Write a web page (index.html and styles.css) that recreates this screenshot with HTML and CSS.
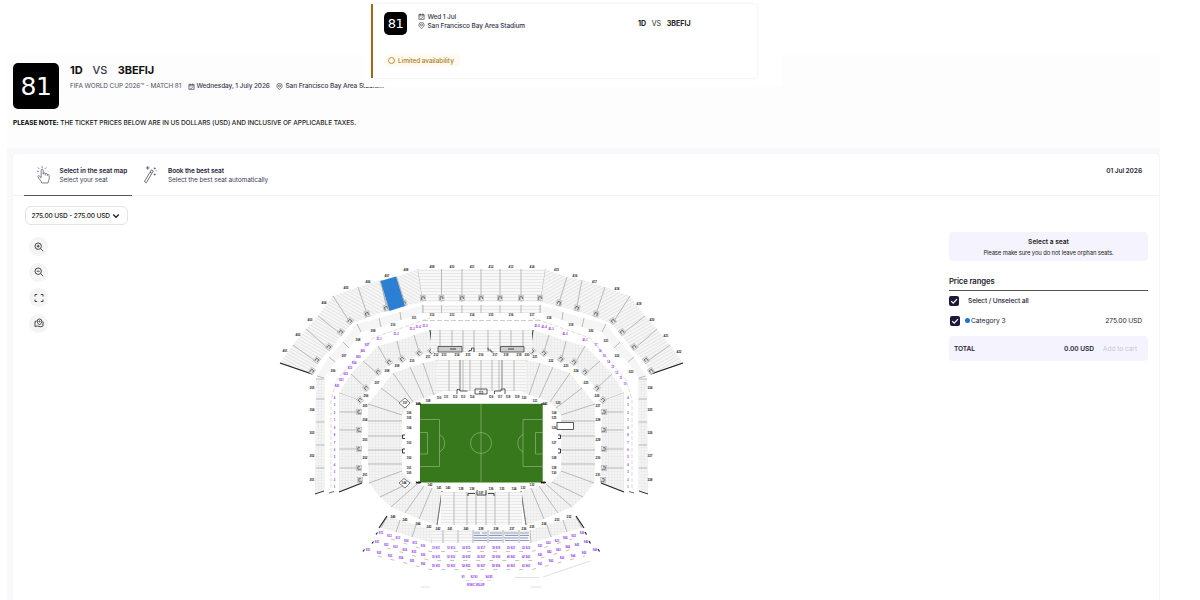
FILE: index.html
```html
<!DOCTYPE html>
<html lang="en">
<head>
<meta charset="utf-8">
<title>Match 81 tickets</title>
<link rel="stylesheet" href="styles.css">
</head>
<body>
<svg class="defs" width="0" height="0">
  <symbol id="cal" viewBox="0 0 16 16"><path d="M2 3.500h12v11H2zM2 6.500h12M5 1v4M11 1v4M5 11l2 2 4-4" fill="none" stroke="currentColor" stroke-width="1.500"/></symbol>
  <symbol id="pin" viewBox="0 0 16 16"><path d="M8 15C4.500 12 2 10 2 6.800a6 6 0 0 1 12 0C14 10 11.500 12 8 15z" fill="none" stroke="currentColor" stroke-width="1.500"/><circle cx="8" cy="6.800" r="2.400" fill="none" stroke="currentColor" stroke-width="1.500"/></symbol>
  <symbol id="check" viewBox="0 0 10 10"><path d="M2.200 5.200l2 2 3.800-4" fill="none" stroke="#fff" stroke-width="1.200"/></symbol>
</svg>
<div class="page">
  <header class="hero">
    <div class="event">
      <div class="badge">81</div>
      <div class="info">
        <h1 class="teams"><span>1D</span><span class="vs">VS</span><span>3BEFIJ</span></h1>
        <div class="meta">
          <span class="comp">FIFA WORLD CUP 2026™ - MATCH 81</span>
          <svg class="mi"><use href="#cal"/></svg><span class="date">Wednesday, 1 July 2026</span>
          <svg class="mi"><use href="#pin"/></svg><span class="place">San Francisco Bay Area Stadium</span>
        </div>
      </div>
    </div>
    <p class="note"><b>PLEASE NOTE:</b> THE TICKET PRICES BELOW ARE IN US DOLLARS (USD) AND INCLUSIVE OF APPLICABLE TAXES.</p>
  </header>

  <div class="backdrop">
  <main class="panel">
    <nav class="tabs">
      <div class="tab active">
        <svg class="ti" viewBox="0 0 16 20"><path d="M5.500 13V5.500c0-1.600 2.200-1.600 2.200 0V10M7.700 9c.3-1.200 2.200-1 2.200.3V11M9.900 9.500c.4-1 2.200-.8 2.200.5v1.500M12.100 10.500c.5-.8 2-.5 2 .8V14c0 2-1 3-1.300 5H6.200C6 17 3 15 2.200 12.500c-.4-1.500 1.200-1.800 2-.5l1.300 2M6.500 3V1M3.500 4L2 2.500M9.500 4L11 2.500M3 6.500H1" fill="none" stroke="currentColor" stroke-width=".8"/></svg>
        <div><strong>Select in the seat map</strong><span>Select your seat</span></div>
      </div>
      <div class="tab second">
        <svg class="ti" viewBox="0 0 16 20"><path d="M1.500 17.500L9 5l2 1.200L3.500 18.800zM7.500 7.500l2 1.200M5 1v4M3 3h4M12.500 2.500v2M11.500 3.500h2M12.500 9v2M11.500 10h2M14 5.500v1" fill="none" stroke="currentColor" stroke-width=".9"/></svg>
        <div><strong>Book the best seat</strong><span>Select the best seat automatically</span></div>
      </div>
      <time class="day">01 Jul 2026</time>
    </nav>
    <div class="content">
      <aside class="tools">
        <button class="filter"><span>275.00 USD - 275.00 USD</span><svg viewBox="0 0 8 6"><path d="M1.200 1.500L4 4.300l2.800-2.800" fill="none" stroke="#222" stroke-width="1.300"/></svg></button>
        <button class="tool"><svg viewBox="0 0 10 10"><path d="M6.500 6.500L9.200 9.200M4.200 2.700v3M2.700 4.200h3"/><circle cx="4.200" cy="4.200" r="3.200"/></svg></button>
        <button class="tool"><svg viewBox="0 0 10 10"><path d="M6.500 6.500L9.200 9.200M2.700 4.200h3"/><circle cx="4.200" cy="4.200" r="3.200"/></svg></button>
        <button class="tool"><svg viewBox="0 0 10 10"><path d="M1 3.500V1.500h2.200M6.800 1.500H9v2M9 6.500v2H6.800M3.200 8.500H1v-2"/></svg></button>
        <button class="tool"><svg viewBox="0 0 10 10"><path d="M2.600 3L1 3.500v5L3.500 8l3 .8L9 8V3.500M5.500 7C4 5.500 3.200 4.600 3.200 3.300a2.300 2.300 0 0 1 4.600 0C7.800 4.600 7 5.500 5.500 7z"/><circle cx="5.500" cy="3.400" r=".6"/></svg></button>
      </aside>
      <svg id="map" class="map" viewBox="270 255 430 345"></svg>
      <aside class="cart">
        <div class="hint"><strong>Select a seat</strong><span>Please make sure you do not leave orphan seats.</span></div>
        <h2>Price ranges</h2>
        <div class="row all"><svg class="box"><use href="#check"/></svg><span>Select / Unselect all</span></div>
        <div class="row cat"><svg class="box"><use href="#check"/></svg><i class="dot"></i><span>Category 3</span><span class="price">275.00 USD</span></div>
        <div class="total"><b>TOTAL</b><b class="sum">0.00 USD</b><span class="add">Add to cart</span></div>
      </aside>
    </div>
  </main>
  </div>
</div>

<div class="overlay">
  <article class="ticket">
    <div class="badge small">81</div>
    <div class="when">
      <div><svg class="mi"><use href="#cal"/></svg><span>Wed 1 Jul</span></div>
      <div><svg class="mi"><use href="#pin"/></svg><span>San Francisco Bay Area Stadium</span></div>
    </div>
    <div class="pair"><b>1D</b><span>VS</span><b>3BEFIJ</b></div>
    <div class="avail"><i></i><span>Limited availability</span></div>
  </article>
</div>
<script src="map.js"></script>
</body>
</html>
```
FILE: styles.css
```css
* { box-sizing: border-box; }
body { margin: 0; width: 1200px; height: 600px; overflow: hidden; background: #fff; font-family: Inter, "Liberation Sans", sans-serif; color: #25253a; position: relative; }
.defs { position: absolute; }
.page { margin: 55px 40px 0 7px; height: 545px; background: #fdfdfe; overflow: hidden; }
.hero { height: 93px; padding: 8px 0 0 6px; }
.event { display: flex; height: 46px; }
.badge { width: 46px; height: 46px; border-radius: 5px; background: #000; color: #fff; font: 25px/47px "DejaVu Sans", sans-serif; text-align: center; letter-spacing: -.5px; }
.info { margin-left: 11px; white-space: nowrap; }
.teams { margin: 1px 0 0; font-size: 11px; line-height: 13px; font-weight: 700; display: flex; letter-spacing: -.1px; color: #111; }
.teams span { margin-right: 11px; }
.teams .vs { font-weight: 500; color: #35354a; margin: 0 10.500px 0 -1px; }
.meta { display: flex; align-items: center; height: 10px; margin-top: 4px; font-size: 6.500px; color: #38384c; }
.mi { width: 7px; height: 7px; color: #38384c; flex: none; }
.comp { width: 117.500px; color: #505062; letter-spacing: -.12px; }
.date { width: 79px; margin-left: 2px; font-weight: 500; letter-spacing: -.1px; }
.place { margin-left: 3px; font-weight: 500; letter-spacing: -.08px; }
.note { margin: 10px 0 0; font-size: 6.500px; line-height: 8px; color: #222; letter-spacing: -.075px; font-weight: 500; }
.note b { color: #000; }

.backdrop { background: #f9f9fc; padding: 6px 1px 0 6px; height: 452px; }
.panel { background: #fff; height: 446px; box-shadow: 0 0 2px #ececf2; border-radius: 4px 4px 0 0; }
.tabs { display: flex; height: 42px; border-bottom: 1px solid #f1f1f4; padding-left: 11px; font-size: 6.500px; line-height: 9px; }
.tab { display: flex; padding-top: 12px; height: 42px; }
.tab.active { width: 108px; border-bottom: 1.500px solid #55556a; }
.tab div { display: flex; flex-direction: column; white-space: nowrap; padding-top: 1px; }
.tab strong { font-weight: 600; letter-spacing: -.07px; }
.second strong { letter-spacing: -.13px; }
.tab span { letter-spacing: -.1px; color: #40405a; }
.ti { width: 15px; height: 19px; margin: -1px 8.500px 0 12px; color: #55556a; flex: none; }
.second .ti { margin-left: 11px; margin-right: 10px; }
.day { margin: 13px 17px 0 auto; font-size: 6.600px; font-weight: 600; letter-spacing: -.1px; }
.content { display: flex; height: 404px; }
.tools { width: 115px; padding: 10px 0 0 12px; display: flex; flex-direction: column; }
button { font-family: inherit; border: 0; padding: 0; }
.filter { width: 103px; height: 19px; border: 1px solid #e3e3e8; border-radius: 6px; background: #fff; font-size: 6.600px; color: #222; display: flex; align-items: center; padding-left: 5.500px; margin-bottom: 12px; white-space: nowrap; font-weight: 500; letter-spacing: -.15px; }
.filter span { width: 80.500px; text-align: left; }
.filter svg { width: 8px; height: 6px; }
.tool { width: 19px; height: 19px; border-radius: 50%; background: #f4f4f5; margin: 0 0 6.500px 4px; display: flex; align-items: center; justify-content: center; }
.tool svg { width: 10px; height: 10px; fill: none; stroke: #333; stroke-width: .9; }
.map { width: 430px; height: 345px; margin: 59px 0 0 142px; flex: none; }
.map text { font: bold 2.900px "Liberation Sans", sans-serif; text-anchor: middle; fill: #111; }
.map .p text { fill: #8a1ff0; font-size: 2.600px; }
.cart { width: 199px; margin: 36px 11px 0 auto; }
.hint { height: 29px; border-radius: 4px; background: #f4f3fe; text-align: center; display: flex; flex-direction: column; padding-top: 6px; line-height: 9.500px; font-size: 6.600px; color: #222; }
.hint strong { font-weight: 600; }
.hint span { font-size: 5.900px; letter-spacing: -.13px; }
.cart h2 { margin: 15px 0 0; height: 15px; font-size: 7.700px; line-height: 11px; font-weight: 600; color: #1b1b28; border-bottom: 1px solid #555562; letter-spacing: -.1px; }
.row { display: flex; align-items: center; height: 20px; font-size: 6.700px; font-weight: 500; }
.box { width: 10px; height: 10px; border-radius: 2px; background: #1d1a38; }
.all { height: 20px; }
.all span { margin-left: 9px; letter-spacing: -.13px; }
.cat { height: 19px; padding-left: 1px; font-weight: 400; }
.cat span { letter-spacing: -.06px; }
.dot { width: 5px; height: 5px; border-radius: 50%; background: #1673d8; margin: 0 1px 0 5px; }
.cat .price { margin-left: auto; margin-right: 6px; letter-spacing: -.12px; }
.total { margin-top: 6px; height: 25px; border-radius: 4px; background: #f4f3fe; display: flex; align-items: center; padding: 0 11px 0 5px; font-size: 6.600px; }
.total b { font-weight: 600; letter-spacing: -.07px; }
.sum { margin-left: auto; margin-right: 9px; }
.add { color: #c9c9d6; letter-spacing: -.05px; }

.overlay { position: absolute; left: 364px; top: 0; width: 418px; height: 87px; padding: 4px 25px 0 7px; background: #fff; }
.ticket { height: 74px; border-left: 2px solid #9a6c18; border-radius: 0 4px 4px 0; box-shadow: 0 0 3px #e6e6ea; display: grid; grid-template-columns: 34px 220px 1fr; grid-template-rows: 46px 1fr; padding: 8px 0 0 11px; color: #33334a; }
.small { width: 23px; height: 23px; font-size: 13px; line-height: 23px; }
.when { font-size: 6.500px; font-weight: 500; letter-spacing: -.11px; }
.when div { display: flex; align-items: center; height: 9px; gap: 2.500px; }
.pair { font-size: 7.100px; display: flex; gap: 5.500px; padding-top: 7px; line-height: 9px; color: #222; }
.pair b { font-weight: 700; }
.avail { grid-column: 1 / 3; width: 77px; height: 13px; margin-top: -4px; border-radius: 6.500px; background: #fef9f1; color: #b17e17; font-size: 6.500px; font-weight: 500; letter-spacing: -.08px; display: flex; align-items: center; padding-left: 4px; gap: 3px; white-space: nowrap; }
.avail i { width: 7px; height: 7px; border: 1px solid #bd902f; border-radius: 50%; flex: none; }
```
FILE: map.js
```js
// Stadium geometry: left half is listed and mirrored about x = 481.5.
const AX = 963;
let out = `<defs>
<pattern id="g" width="3" height="3" patternUnits="userSpaceOnUse"><rect width="3" height="3" fill="#f4f4f4"/><path d="M0 .5H3M.5 0V3" stroke="#e8e8e8" stroke-width=".6"/></pattern>
<pattern id="r" width="3" height="3" patternUnits="userSpaceOnUse"><rect width="3" height="3" fill="#f8f8f8"/><path d="M0 .5H3" stroke="#dedede" stroke-width=".6"/></pattern>
<pattern id="d" width="3" height="3" patternUnits="userSpaceOnUse" patternTransform="rotate(30)"><rect width="3" height="3" fill="#f6f6f6"/><path d="M0 .5H3" stroke="#dedede" stroke-width=".7"/></pattern>
</defs>`;
const pts = a => a.map(p => p.join(',')).join(' ');
const poly = (a, f) => `<polygon points="${pts(a)}" fill="${f}"/>`;
const line = (a, b, c = '#b9b9b9', w = 1) => `<path d="M${a}L${b}" stroke="${c}" stroke-width="${w}" fill="none"/>`;
const both = s => s + `<g transform="translate(${AX} 0) scale(-1 1)">${s}</g>`;
const ring = (o, i, f) => poly([...o, ...i.slice().reverse()], f) + o.map((p, k) => line(p, i[k])).join('');
const gate = (x, y, r = 0) => `<g transform="translate(${x} ${y}) rotate(${r})"><rect x="-2.500" y="-2.800" width="5" height="5.600" fill="#e2e2e2" stroke="#aaa" stroke-width=".5"/><path d="M-1.300 2V-1.200H1.300V1" fill="none" stroke="#444" stroke-width=".7"/></g>`;
const text = (x, y, s) => `<text x="${x}" y="${y + 1}">${s}</text>`;

// upper tier
const uo = [[280,363],[293,345],[306,329],[318,316],[333,296],[358,287],[381,280],[396,277],[418,269]];
const ui = [[312,374],[318,363],[330,350],[342,335],[351,324],[368,317],[387,311],[405,306],[423,302]];
let h = ring(uo, ui, 'url(#d)') + line(uo[0], ui[0], '#222', 1.200);
ui.slice(0, 8).forEach((p, k) => h += gate(p[0] + (k ? -1 : 0), p[1] - 3, k < 5 ? 35 : -15));
// middle tier
h += ring([[317,376],[329,357],[343,342],[357,324],[379,318],[400,312],[423,305]], [[324,378],[335,362],[349,348],[361,332],[381,327],[401,320],[423,313]], '#f5f5f5');
h += poly([[316,379],[324.500,379],[324.500,491],[315,494]], 'url(#g)');
[379, 399, 422, 445, 468].forEach(y => h += line([316, y], [324.500, y]));
h += line([315, 494], [324, 491], '#333', 1) + line([329, 493], [334, 491.500], '#444', .8);
h += `<path d="M331 488V400L337 380L373 338L430 318" fill="none" stroke="#d8d8ce" stroke-width=".9" stroke-dasharray="4 2"/>`;
// club tier
const co = [[339,393],[351,374],[363,361],[378,346],[397,341],[414,335],[430,330]];
const ci = [[361,401],[367,389],[378,374],[389,365],[402,362],[420,355],[433,352]];
h += ring(co, ci, 'url(#g)');
h += poly([[339,393],[361,401],[362,483],[339,491.500]], 'url(#g)');
[412, 430, 449, 468].forEach(y => h += line([339.500, y], [361, y]) + gate(359, y, -90));
[[360,400],[366,388],[378,372],[389,362],[402,359],[419,353],[431,351]].forEach(p => h += gate(p[0], p[1], -40));
h += gate(360, 480, -90) + line([339, 492], [362, 483], '#222', 1.200) + line([430, 330], [433, 352], '#444', 1);
// lower bowl
const lo = [[437,360],[423,363],[410,367],[393,373],[381,388],[368,404],[368,421],[368,436],[368,450],[368,464],[369,483],[380,497],[391,507],[405,513],[419,519],[437,525]];
const li = [[443,391],[434,395],[424,398],[413,402],[407,408],[402,415],[402,421],[402,436],[402,450],[402,464],[402,471],[411,482],[417,484],[424,486],[432,488],[442,491]];
h += ring(lo, li, 'url(#g)') + line([442, 491], [437, 525], '#777', 1);
h += `<path d="M405 435H402.500V438.500H405M405 449H402.500V453H405" fill="none" stroke="#222" stroke-width=".9"/>`;
// south club
h += ring([[387,517],[400,520],[416,525],[433,530]], [[381,528],[396,532],[412,537],[432,543]], 'url(#g)') + line([387, 516], [379, 528], '#222', 1.200);
out += both(h);
out += `<path d="M399 403L405 398L410 403L405 408zM399 483L404 478.500L410 483L405 488z" fill="#fff" stroke="#444" stroke-width=".7"/>`;

// straight stands
const block = (x1, x2, y1, y2, xs) => poly([[x1, y1], [x2, y1], [x2, y2], [x1, y2]], 'url(#r)') + xs.map(x => line([x, y1], [x, y2])).join('');
const cols = [423, 441.500, 462, 481, 500, 521, 540];
out += poly([[418,269],[545,269],[540,302],[423,302]], 'url(#r)') + cols.slice(1, -1).map(x => line([x, 269], [x, 302])).join('') + cols.map(x => gate(x, 298)).join('');
out += block(423, 540, 305, 313, cols);
out += `<path d="M423 320.500H540" stroke="#ccc" stroke-width="1" stroke-dasharray="5 2"/>`;
out += block(431, 532, 330, 352, [440, 452, 463, 474, 488, 500, 511, 523]);
out += block(437, 526, 360, 391, [449, 460, 463, 470, 481, 492, 499, 502, 514]);
out += `<path d="M438 346.500H462V352H438zM500.500 346.500H524V352H500.500z" fill="#ccc" stroke="#444" stroke-width=".8"/><path d="M450 349h6M508 349h6" stroke="#444" stroke-width="1.200"/><path d="M469 352V350.500H471.500V348H474V352M488 347.500V350H491V352H493.500M457 394V389.500H460V391H467.500M475 389H487V394H475zM494.500 394V391H501V389H505V394" fill="none" stroke="#333" stroke-width=".8"/><path d="M460 360V389M502 360V389" stroke="#999" stroke-width=".9"/>`;
out += block(441, 522, 492, 525, [454, 467, 476, 486, 495, 509]);
out += `<path d="M468 496V493.500H475M477 495H486V490M488 493.500H494V496M477 490V495" fill="none" stroke="#333" stroke-width=".9"/>`;
out += block(432, 530, 530, 543, [443, 458, 473, 488, 503, 519]);
out += `<path d="M474 533H480M482 533H487M490 533H502M504 533H518M520 533H529M474 535.500H487M489 535.500H502M505 535.500H518M520 535.500H529M474 538H487M489 538H502M504 538H518M520 538H528M474 540.500H487M489 540.500H502M505 540.500H518M520 540.500H529" stroke="#8e9bbd" stroke-width="1.100"/><rect x="557" y="422.500" width="16.500" height="7" fill="#fff" stroke="#333" stroke-width=".8"/>`;
out += `<path d="M380.500 281L396 276.500L405 306L389.500 311z" fill="#2c80d3"/><path d="M380 281L388.500 310M396.500 276.500L405.500 305" stroke="#aaa" fill="none" stroke-width=".8"/>`;

// pitch
out += `<rect x="420" y="403.800" width="122.700" height="78.700" fill="#38781c"/><g fill="none" stroke="#8fb57d" stroke-width=".7"><path d="M481 404V482.500M420 419.500H439.500V466.500H420M420 432.500H427.500V454H420M542.500 419.500H523V466.500H542.500M542.500 432.500H535.500V454H542.500M439.500 434.500A10 10 0 0 1 439.500 452M523 434.500A10 10 0 0 0 523 452"/><circle cx="481" cy="443" r="10.500"/></g><path d="M416 404h5M541 404h5M416 482.500h5M541 482.500h5" stroke="#222" stroke-width="1"/>`;

// section numbers
const put = (n, a) => a.forEach((p, k) => out += text(p[0], p[1], n + k));
put(401, [[285,351],[298,335],[310,320],[324,303],[346,288],[368,282],[387,276],[406,270],[432,267],[452,267],[472,267],[491,267],[511,267],[532,267],[556.500,270],[575,276],[594.500,282],[617,289],[639,304],[652,320],[666,336],[679,352]]);
put(301, [[312,480],[312,456],[312,433],[312,410],[312,388],[333,371],[344,356],[358,340],[373,331],[393,325],[414,318],[432,315],[452,315],[472,315],[491,315],[511,315],[532,315],[549,318],[571,325],[591,331],[606,341],[617,356],[631,372],[650,388],[650,410],[650,433],[650,456],[650,480]]);
const club = [[365,475],[365,458],[365,440],[365,420],[365,406],[366,396],[377,383],[387,371],[397,366],[412,361],[428,357],[436,355],[444,355],[457,355],[468,355]];
put(201, club);
put(216, [[481,355], ...club.slice().reverse().map(p => [AX - p[0], p[1]])]);
const low = [[409,473],[409,468],[409,458],[409,443],[409,428],[409,418],[409,413],[405,403],[418,404],[428,401],[439,398],[446,397],[455,397],[463,397],[472,397]];
put(100, low);
put(115, [[481,393], ...low.slice().reverse().map(p => [AX - p[0], p[1]])]);
put(131, [[543,483],[532,485],[523,488],[514,489],[502,489],[491,489],[481,493],[472,489],[461,489],[448,488],[439,488],[430,485],[418,483],[404,483]]);
put(232, [[569,517],[557,520],[544,524],[532,527],[524,529],[512,529],[496,529],[481,529],[466,529],[450,529],[438,529],[429,527],[418,524],[405,520],[393,517]]);

// suites
out += '<g class="p">';
const along = (a, b, n, f) => { for (let k = 0; k < n; k++) { const t = n > 1 ? k / (n - 1) : 0; out += text(+(a[0] + (b[0] - a[0]) * t).toFixed(1), +(a[1] + (b[1] - a[1]) * t).toFixed(1), f(k)); } };
const side = k => k % 9 + 1;
along([334.500, 487], [334.500, 398], 13, side);
along([628, 487], [628, 398], 13, side);
along([337, 386], [367, 345], 8, k => 'S' + (20 + k));
along([625, 384], [596, 345], 8, k => 10 + k);
[[379, 339], [396, 334], [412, 329], [418, 327], [425, 325.500]].forEach((p, k) => out += text(p[0], p[1], '31-' + (k + 1)));
[[585, 339.500], [565, 333.500], [551, 329], [544, 327], [537, 325.500]].forEach((p, k) => out += text(p[0], p[1], '41-' + (k + 1)));
[[548, 533, 381], [557, 542, 377], [566, 550, 368]].forEach((r, q) => {
  along([r[2], r[1]], [423, r[0] - 2], 6, k => 'S' + (q * 20 + 11 + k));
  along([436, r[0]], [526, r[0]], 7, k => `${q * 20 + 10 + 2 * k} S${q * 20 + 11 + 2 * k}`);
  along([540, r[0] - 2], [AX - r[2], r[1]], 6, k => 'S' + (q * 20 + 21 + k));
  out += `<path d="M${r[2] + 10} ${r[1] + 6}L430 ${r[0] + 3.500}H532L${AX - r[2] - 10} ${r[1] + 6}" fill="none" stroke="#c4c8b4" stroke-width="1" stroke-dasharray="4 9"/>`;
  out += `<path d="M${r[2] - 5} ${r[1] + 1.500}l1.500 -2M${AX - r[2] + 3} ${r[1] - 1}l1.500 2.500" stroke="#222" stroke-width="1.200"/>`;
});
[[463, 'S1'], [474, 'S2 S3'], [489, 'S4 S5']].forEach(p => out += text(p[0], 577, p[1]));
out += `<path d="M466 580.500h4M479 580.500h4M487 580.500h4M421 587h9M531 587h10M515 577.500h24M543 577L590 561" stroke="#ddd" stroke-width=".9" fill="none"/>`;
out += text(475.500, 585, 'SONIC VELUR') + '</g>';
document.getElementById('map').innerHTML = out;
```
